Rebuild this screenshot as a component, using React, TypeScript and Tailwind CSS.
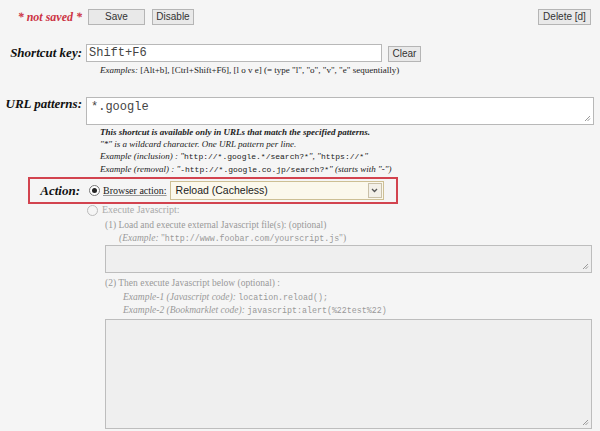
import React from "react";

const serif = { fontFamily: '"Liberation Serif", "DejaVu Serif", serif' };
const mono = { fontFamily: '"Liberation Mono", "DejaVu Sans Mono", monospace' };

function Btn({ children, w }: { children: React.ReactNode; w: string }) {
  return (
    <div
      className={`${w} h-[16px] border border-[#b5b5b5] bg-[#e9e9e9] text-[10px] leading-[14px] text-[#333] flex items-center justify-center whitespace-nowrap`}
      style={{ fontFamily: '"Liberation Sans", Arial, sans-serif' }}
    >
      {children}
    </div>
  );
}

function Resize() {
  return (
    <svg className="absolute right-[2px] bottom-[2px]" width="7" height="7" viewBox="0 0 7 7">
      <path d="M6 1 L1 6 M6 3.5 L3.5 6" stroke="#999" strokeWidth="1" />
    </svg>
  );
}

export default function App() {
  return (
    <div className="w-[600px] h-[431px] bg-[#f5f5f5] overflow-hidden relative" style={serif}>
      {/* Row 1 */}
      <div className="flex items-center pt-[9px] pr-[9px]">
        <div className="w-[82px] text-right text-[12px] font-bold italic text-[#cc3344] leading-[16px] whitespace-nowrap">
          * not saved *
        </div>
        <div className="ml-[6px]">
          <Btn w="w-[57px]">Save</Btn>
        </div>
        <div className="ml-[7px]">
          <Btn w="w-[42px]">Disable</Btn>
        </div>
        <div className="ml-auto">
          <Btn w="w-[53px]">Delete [d]</Btn>
        </div>
      </div>

      {/* Shortcut key */}
      <div className="flex items-center mt-[19px]">
        <div className="w-[82px] text-right text-[13px] font-bold italic text-[#111] leading-[18px] whitespace-nowrap">
          Shortcut key:
        </div>
        <div
          className="ml-[4px] w-[296px] h-[18px] bg-white border border-[#b8b8b8] text-[12px] leading-[16px] pl-[2px] text-[#444]"
          style={mono}
        >
          Shift+F6
        </div>
        <div className="ml-[6px] mt-[2px]">
          <Btn w="w-[33px]">Clear</Btn>
        </div>
      </div>
      <div className="pl-[100px] mt-[2px] text-[9px] leading-[12px] text-[#222] whitespace-nowrap">
        <i>Examples:</i> [Alt+b], [Ctrl+Shift+F6], [l o v e] (= type "l", "o", "v", "e" sequentially)
      </div>

      {/* URL patterns */}
      <div className="flex items-start mt-[21px]">
        <div className="w-[82px] text-right text-[13px] font-bold italic text-[#111] leading-[18px] whitespace-nowrap -mt-[2px]">
          URL patterns:
        </div>
        <div
          className="relative ml-[4px] w-[508px] h-[28px] bg-white border border-[#b8b8b8] text-[12px] leading-[16px] pl-[4px] pt-[1px] text-[#444]"
          style={mono}
        >
          *.google
          <Resize />
        </div>
      </div>
      <div className="pl-[100px] mt-[1px] text-[9px] leading-[12px] text-[#222] italic whitespace-nowrap">
        <div className="font-bold">This shortcut is available only in URLs that match the specified patterns.</div>
        <div>"*" is a wildcard character. One URL pattern per line.</div>
        <div>
          Example (inclusion) : "
          <span className="not-italic text-[8px]" style={mono}>
            http://*.google.*/search?*
          </span>
          ", "
          <span className="not-italic text-[8px]" style={mono}>
            https://*
          </span>
          "
        </div>
        <div>
          Example (removal) : "
          <span className="not-italic text-[8px]" style={mono}>
            -http://*.google.co.jp/search?*
          </span>
          " (starts with "-")
        </div>
      </div>

      {/* Action box */}
      <div className="ml-[28px] mt-[1px] w-[370px] h-[27px] border-2 border-[#d2434f] flex items-center">
        <div className="w-[50px] text-right text-[13px] font-bold italic text-[#111] leading-[18px]">Action:</div>
        <div className="ml-[9px] w-[11px] h-[11px] rounded-full border border-[#777] bg-white flex items-center justify-center">
          <div className="w-[5px] h-[5px] rounded-full bg-[#222]" />
        </div>
        <div className="ml-[3px] text-[10px] text-[#222] underline decoration-[#999] whitespace-nowrap">Browser action:</div>
        <div
          className="ml-[3px] w-[214px] h-[19px] bg-[#fbf8ec] border border-[#cdbf94] flex items-center text-[10.5px] text-[#222] pl-[5px] pr-[1px]"
          style={{ fontFamily: '"Liberation Sans", Arial, sans-serif' }}
        >
          <span className="flex-1">Reload (Cacheless)</span>
          <div className="w-[14px] h-[15px] border border-[#c9c0a8] bg-[#f3f0e8] flex items-center justify-center">
            <svg width="7" height="5" viewBox="0 0 7 5">
              <path d="M1 1 L3.5 3.5 L6 1" stroke="#555" strokeWidth="1.3" fill="none" />
            </svg>
          </div>
        </div>
      </div>

      {/* Execute Javascript */}
      <div className="flex items-center ml-[87px] -mt-[1px]">
        <div className="w-[11px] h-[11px] rounded-full border border-[#bbb] bg-[#f5f5f5]" />
        <div className="ml-[4px] text-[10px] text-[#aaa] leading-[14px]">Execute Javascript:</div>
      </div>
      <div className="pl-[105px] mt-[2px] text-[9.5px] leading-[13px] text-[#999] whitespace-nowrap">
        <div>(1) Load and execute external Javascript file(s): (optional)</div>
        <div className="pl-[14px]">
          <i>(Example:</i> "
          <span className="text-[8.3px]" style={mono}>http://www.foobar.com/yourscript.js</span>")
        </div>
      </div>
      <div className="relative ml-[105px] mt-[0px] w-[487px] h-[28px] bg-[#efefef] border border-[#bdbdbd]">
        <Resize />
      </div>
      <div className="pl-[105px] mt-[4px] text-[9.5px] leading-[13.5px] text-[#999] whitespace-nowrap">
        <div>(2) Then execute Javascript below (optional) :</div>
        <div className="pl-[18px]">
          <i>Example-1 (Javascript code):</i>{" "}
          <span className="text-[8.3px]" style={mono}>location.reload();</span>
        </div>
        <div className="pl-[18px]">
          <i>Example-2 (Bookmarklet code):</i>{" "}
          <span className="text-[8.3px]" style={mono}>javascript:alert(%22test%22)</span>
        </div>
      </div>
      <div className="relative ml-[105px] mt-[1px] w-[487px] h-[110px] bg-[#efefef] border border-[#bdbdbd]">
        <Resize />
      </div>
    </div>
  );
}
